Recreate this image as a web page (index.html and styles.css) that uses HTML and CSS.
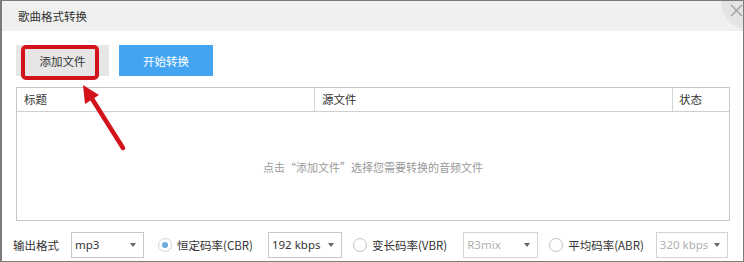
FILE: index.html
```html
<!DOCTYPE html>
<html>
<head>
<meta charset="utf-8">
	<title>歌曲格式转换</title>
	<link rel="stylesheet" href="styles.css">
</head>
<body>
<div class="window">
	<div class="titlebar">
		<span class="title">歌曲格式转换</span>
		<span class="close"><svg width="13" height="13" viewBox="0 0 13 13"><path d="M1 1L12 12M12 1L1 12" stroke="#a0a0a0" stroke-width="1.3" fill="none"/></svg></span>
	</div>
	<div class="main">
		<div class="toolbar">
			<button class="btn btn-add">添加文件</button>
			<button class="btn btn-start">开始转换</button>
		</div>
		<div class="table">
			<div class="thead">
				<div class="th">标题</div>
				<div class="th">源文件</div>
				<div class="th">状态</div>
			</div>
			<div class="empty">点击“添加文件”选择您需要转换的音频文件</div>
		</div>
		<div class="options">
			<span class="lbl">输出格式</span>
			<div class="select sel-fmt">mp3<i class="caret"></i></div>
			<span class="radio checked"></span>
			<span class="opt">恒定码率(CBR)</span>
			<div class="select sel-cbr">192 kbps<i class="caret"></i></div>
			<span class="radio"></span>
			<span class="opt">变长码率(VBR)</span>
			<div class="select sel-vbr disabled">R3mix<i class="caret"></i></div>
			<span class="radio"></span>
			<span class="opt">平均码率(ABR)</span>
			<div class="select sel-abr disabled">320 kbps<i class="caret"></i></div>
		</div>
	</div>
	<!-- 红色标注 -->
	<div class="mark"></div>
	<svg class="arrow" width="744" height="262" viewBox="0 0 744 262">
		<path d="M123 148L89 94" stroke="#d3131b" stroke-width="4.5" stroke-linecap="round"/>
		<polygon points="83,85 99,95 85,104" fill="#d3131b"/>
	</svg>
</div>
</body>
</html>
```
FILE: styles.css
```css
*{margin: 0;padding: 0;box-sizing: border-box;}
body{
	width: 744px;
	height: 262px;
	overflow: hidden;
	font-family: "Noto Sans CJK SC", "Noto Sans", sans-serif;
	font-size: 11.5px;
	color: #333;
}
.window{
	position: relative;
	width: 744px;
	height: 262px;
	border: 1px solid #7b7b7b;
	border-left-width: 2px;
	background: #fff;
	overflow: hidden;
}
.titlebar{
	height: 30px;
	line-height: 31px;
	background: #f0f0f0;
	padding-left: 16px;
}
.close{
	position: absolute;
	left: 719px;
	top: -26px;
	width: 54px;
	height: 54px;
	border-radius: 50%;
	background: #e4e4e4;
}
.close svg{
	position: absolute;
	left: 9px;
	top: 29px;
}
.main{
	padding: 14px 0 0 14px;
}
.toolbar{
	display: flex;
	gap: 10px;
	height: 31px;
}
.btn{
	width: 93px;
	height: 31px;
	border: none;
	font-family: inherit;
	font-size: 11.5px;
}
.btn-add{
	background: #e6e6e6;
	color: #333;
}
.btn-start{
	background: #43a5f2;
	color: #fff;
	width: 94px;
}
.table{
	margin-top: 11px;
	width: 714px;
	height: 134px;
	border: 1px solid #c6c6c6;
}
.thead{
	display: grid;
	grid-template-columns: 297px 358px 1fr;
	height: 24px;
	border-bottom: 1px solid #d0d0d0;
}
.th{
	line-height: 23px;
	padding-left: 7px;
}
.th + .th{
	border-left: 1px solid #d6d6d6;
}
.th:last-child{
	padding-left: 6px;
}
.empty{
	text-align: center;
	color: #9a9a9a;
	font-size: 11px;
	padding-top: 47px;
}
.options{
	display: flex;
	align-items: center;
	height: 26px;
	margin-top: 11px;
	margin-left: -3px;
}
.lbl{
	width: 58px;
}
.select{
	position: relative;
	height: 26px;
	border: 1px solid #c8c8c8;
	font-family: "Noto Sans", sans-serif;
	font-size: 11.5px;
	line-height: 24px;
	padding-left: 3px;
	color: #333;
}
.select.disabled{
	color: #b0b0b0;
	border-color: #d4d4d4;
}
.caret{
	position: absolute;
	right: 7px;
	top: 10px;
	border-left: 3px solid transparent;
	border-right: 3px solid transparent;
	border-top: 4px solid #666;
}
.sel-fmt{width: 73px;}
.sel-cbr{width: 74px;margin-left: 15px;}
.sel-vbr{width: 75px;margin-left: 16px;}
.sel-abr{width: 72px;margin-left: 12px;}
.radio{
	width: 14px;
	height: 14px;
	border: 1px solid #c4c4c4;
	border-radius: 50%;
	margin-left: 14px;
	margin-right: 5px;
	position: relative;
}
.sel-cbr + .radio, .sel-vbr + .radio{
	margin-left: 11px;
}
.radio.checked{
	border-color: #d2d2d2;
}
.radio.checked::after{
	content: "";
	position: absolute;
	left: 3px;
	top: 3px;
	width: 6px;
	height: 6px;
	border-radius: 50%;
	background: #6aa9de;
}
.opt{
	white-space: nowrap;
}
/*标注*/
.mark{
	position: absolute;
	left: 19px;
	top: 44px;
	width: 78px;
	height: 35px;
	border: 4px solid #d3131b;
	border-radius: 5px;
}
.arrow{
	position: absolute;
	left: -2px;
	top: -1px;
	pointer-events: none;
}
```
